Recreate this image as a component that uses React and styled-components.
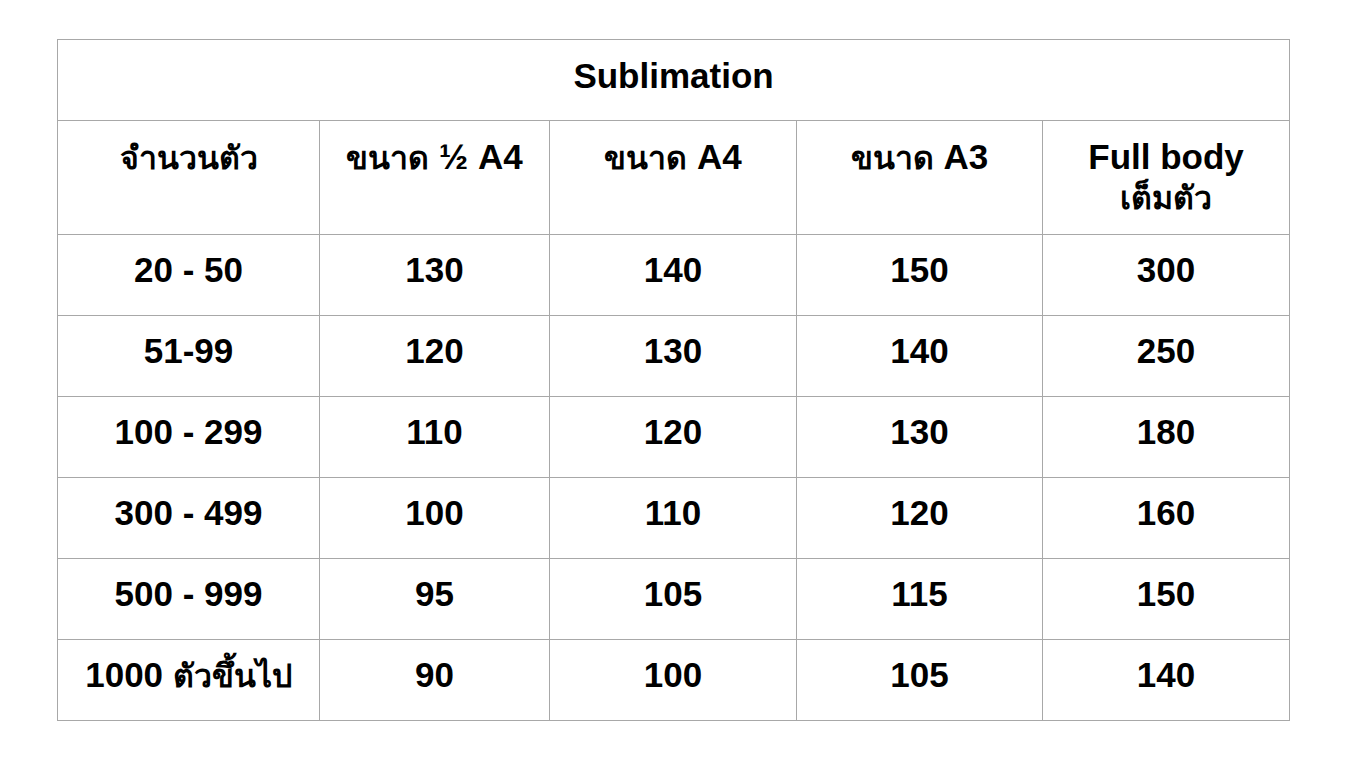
import React from "react";
import styled, { createGlobalStyle } from "styled-components";

const GlobalStyle = createGlobalStyle`
  html, body {
    margin: 0;
    padding: 0;
    background: #ffffff;
  }
  body {
    font-family: "Liberation Sans", Arial, "Noto Sans", sans-serif;
    color: #000000;
  }
`;

const Page = styled.div`
  padding: 39px 0 0 57px;
`;

const Table = styled.table`
  border-collapse: collapse;
  table-layout: fixed;
  width: 1232px;
  font-family: "Liberation Sans", Arial, "Noto Sans", sans-serif;
  font-weight: 700;
  font-size: 35px;
  line-height: 40px;
`;

const Col = styled.col`
  width: ${(p) => p.$w}px;
`;

const Row = styled.tr`
  height: ${(p) => p.$h}px;
`;

const Cell = styled.td`
  border: 1px solid #a8a8a8;
  text-align: center;
  vertical-align: top;
  padding: ${(p) => p.$top || 15}px 4px 0 4px;
  box-sizing: border-box;
`;

// Thai glyphs come from a wider fallback font; shrink them a touch
const Thai = styled.span`
  font-size: 32px;
`;

const widths = [262, 230, 247, 246, 247];

const rows = [
  ["20 - 50", "130", "140", "150", "300"],
  ["51-99", "120", "130", "140", "250"],
  ["100 - 299", "110", "120", "130", "180"],
  ["300 - 499", "100", "110", "120", "160"],
  ["500 - 999", "95", "105", "115", "150"],
  [
    <>
      1000 <Thai>ตัวขึ้นไป</Thai>
    </>,
    "90",
    "100",
    "105",
    "140",
  ],
];

export default function App() {
  return (
    <>
      <GlobalStyle />
      <Page>
        <Table>
          <colgroup>
            {widths.map((w, i) => (
              <Col key={i} $w={w} />
            ))}
          </colgroup>
          <tbody>
            <Row $h={81}>
              <Cell colSpan={5} $top={16}>
                Sublimation
              </Cell>
            </Row>
            <Row $h={114}>
              <Cell $top={16}>
                <Thai>จำนวนตัว</Thai>
              </Cell>
              <Cell $top={16}>
                <Thai>ขนาด</Thai> ½ A4
              </Cell>
              <Cell $top={16}>
                <Thai>ขนาด</Thai> A4
              </Cell>
              <Cell $top={16}>
                <Thai>ขนาด</Thai> A3
              </Cell>
              <Cell $top={16}>
                Full body
                <br />
                <Thai>เต็มตัว</Thai>
              </Cell>
            </Row>
            {rows.map((r, ri) => (
              <Row key={ri} $h={81}>
                {r.map((v, i) => (
                  <Cell key={i}>{v}</Cell>
                ))}
              </Row>
            ))}
          </tbody>
        </Table>
      </Page>
    </>
  );
}
